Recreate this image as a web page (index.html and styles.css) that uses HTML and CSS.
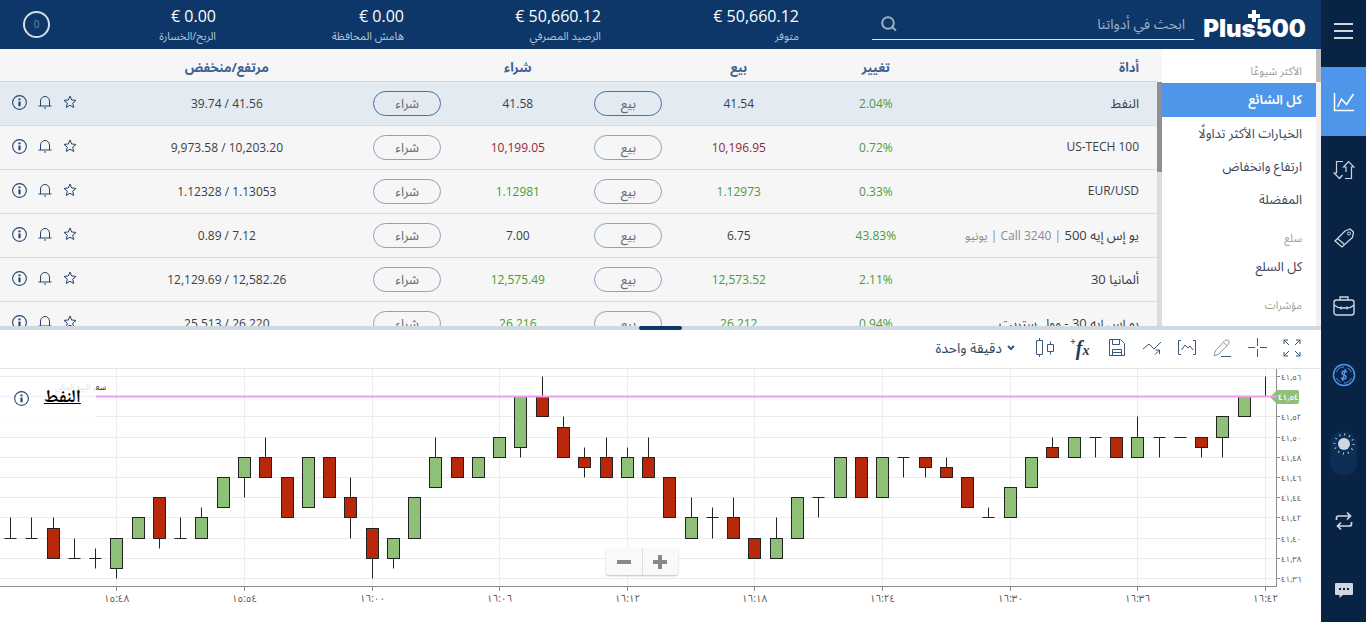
FILE: index.html
```html
<!DOCTYPE html>
<html lang="ar" dir="rtl">
<head>
<meta charset="utf-8">
<title>Plus500</title>
<link rel="stylesheet" href="styles.css">
</head>
<body>
<svg class="defs" aria-hidden="true">
  <symbol id="star" viewBox="0 0 14 14"><path d="M7 1l1.700 4 4.300.400-3.300 2.800 1 4.300L7 10.200l-3.700 2.300 1-4.300L1 5.400 5.300 5z"/></symbol>
  <symbol id="bell" viewBox="0 0 14 14"><path d="M.500 11h13M2.500 11V6a4.500 4.500 0 0 1 9 0v5M6 13h2"/></symbol>
  <symbol id="info" viewBox="0 0 14 14"><circle cx="7" cy="7" r="6.400"/><path class="thick" d="M7 6v4.500M7 3.300v1.500"/></symbol>
</svg>

<nav class="rail">
  <button class="rail-btn menu" aria-label="القائمة"><svg width="20" height="16" viewBox="0 0 20 16"><path d="M0 1h19M0 8h19M0 15h19" stroke-width="2"/></svg></button>
  <button class="rail-btn active" aria-label="التداول"><svg width="22" height="22" viewBox="0 0 22 22"><path d="M1.500 2v17.500H21M4.500 16l4-8 5 5.500L20.500 3" stroke-width="1.500"/></svg></button>
  <button class="rail-btn" aria-label="المراكز"><svg width="22" height="20" viewBox="0 0 22 20"><path d="M10 1.500H3.500V13H1l5.500 5.500L9.500 15M12 18.500h6.500V7H21l-5.500-5.500L10.500 7H13v5" stroke-width="1.200"/></svg></button>
  <button class="rail-btn" aria-label="الأوامر"><svg width="20" height="20" viewBox="0 0 20 20"><path d="M11 3l5-2 3.500 3-1 5.500L8 19 1 13zM3.500 10.500l7 6" stroke-width="1.300"/><circle cx="15" cy="5.500" r="1.500"/></svg></button>
  <button class="rail-btn" aria-label="المراكز المغلقة"><svg width="22" height="20" viewBox="0 0 22 20"><rect x="1" y="4" width="20" height="15" rx="2.500" stroke-width="1.400"/><path d="M7 4V1h8v3M1 9q4 3 7 3h6q4 0 7-3M8 10.500v3M14 10.500v3" stroke-width="1.300"/></svg></button>
  <button class="rail-btn funds" aria-label="الأموال"><svg width="24" height="24" viewBox="0 0 24 24"><circle cx="12" cy="12" r="10.500" stroke-width="1.500"/><path d="M4.500 9A8 8 0 0 1 12 4M19.500 15A8 8 0 0 1 12 20M4.500 15a8 8 0 0 0 4 4M15.500 5a8 8 0 0 1 4 4"/><path d="M15 9.500q-.500-1.500-2.500-1.500-2.500 0-2.500 2 0 1.500 2 2t2 2q0 2-2.500 2-2 0-2.500-1.500M13.500 6l-3 12" stroke-width="1.500"/></svg></button>
  <button class="rail-btn theme" aria-label="السمة"><span class="pill"><svg width="24" height="24" viewBox="0 0 24 24"><circle cx="12" cy="12" r="6" class="solid"/><circle cx="12" cy="12" r="9.500" stroke-dasharray="1 3.970" stroke-width="2"/></svg></span></button>
  <button class="rail-btn swap" aria-label="تبديل"><svg width="18" height="20" viewBox="0 0 18 20"><path d="M1.500 9V7q0-2 2-2H15M12 1.500L15.500 5 12 8.500M16.500 11v2q0 2-2 2H3M6 11.500L2.500 15 6 18.500" stroke-width="1.700"/></svg></button>
  <button class="rail-btn chat" aria-label="الدردشة"><svg width="20" height="17" viewBox="0 0 20 17"><path class="solid" d="M2 1h16q1 0 1 1v10q0 1-1 1H9l-3.500 3V13H2q-1 0-1-1V2q0-1 1-1z"/><path class="dots" d="M5 7h2M9 7h2M13 7h2"/></svg></button>
</nav>

<main class="main">
  <header class="top">
    <div class="logo">Plus500<svg width="12" height="12" viewBox="0 0 12 12"><path d="M4 0h4v4h4v4H8v4H4V8H0V4h4z"/></svg></div>
    <label class="search"><input type="text" placeholder="ابحث في أدواتنا" aria-label="بحث"><svg width="16" height="16" viewBox="0 0 16 16"><circle cx="7" cy="7" r="5.800"/><path d="M11.500 11.500L15 14.500"/></svg></label>
    <dl class="stats">
      <div><dd>€ 50,660.12</dd><dt>متوفر</dt></div>
      <div><dd>€ 50,660.12</dd><dt>الرصيد المصرفي</dt></div>
      <div><dd>€ 0.00</dd><dt>هامش المحافظة</dt></div>
      <div><dd>€ 0.00</dd><dt>الربح/الخسارة</dt></div>
    </dl>
    <span class="counter">0</span>
  </header>

  <section class="market">
    <aside class="cats">
      <div class="cat-list">
        <h2>الأكثر شيوعًا</h2>
        <a href="#" class="on">كل الشائع</a>
        <a href="#">الخيارات الأكثر تداولًا</a>
        <a href="#">ارتفاع وانخفاض</a>
        <a href="#">المفضلة</a>
        <h2>سلع</h2>
        <a href="#">كل السلع</a>
        <h2>مؤشرات</h2>
      </div>
    </aside>
    <div class="scroll"></div>
    <div class="quotes">
      <table>
        <colgroup><col class="c-name"><col class="c-chg"><col class="c-sell"><col class="c-btn"><col class="c-buy"><col class="c-btn"><col class="c-hl"><col class="c-act"></colgroup>
        <thead><tr><th class="name">أداة</th><th>تغيير</th><th>بيع</th><th></th><th>شراء</th><th></th><th>مرتفع/منخفض</th><th></th></tr></thead>
        <tbody>
          <tr class="sel"><td class="name ar">النفط</td><td class="num up">2.04%</td><td class="num">41.54</td><td><button class="deal">بيع</button></td><td class="num">41.58</td><td><button class="deal">شراء</button></td><td class="num">39.74 / 41.56</td><td class="act"><svg><use href="#star"/></svg><svg><use href="#bell"/></svg><svg><use href="#info"/></svg></td></tr>
          <tr><td class="name">US-TECH 100</td><td class="num up">0.72%</td><td class="num down">10,196.95</td><td><button class="deal">بيع</button></td><td class="num down">10,199.05</td><td><button class="deal">شراء</button></td><td class="num">9,973.58 / 10,203.20</td><td class="act"><svg><use href="#star"/></svg><svg><use href="#bell"/></svg><svg><use href="#info"/></svg></td></tr>
          <tr><td class="name">EUR/USD</td><td class="num up">0.33%</td><td class="num up">1.12973</td><td><button class="deal">بيع</button></td><td class="num up">1.12981</td><td><button class="deal">شراء</button></td><td class="num">1.12328 / 1.13053</td><td class="act"><svg><use href="#star"/></svg><svg><use href="#bell"/></svg><svg><use href="#info"/></svg></td></tr>
          <tr><td class="name ar">يو إس إيه 500 <span>| Call 3240 | يونيو</span></td><td class="num up">43.83%</td><td class="num">6.75</td><td><button class="deal">بيع</button></td><td class="num">7.00</td><td><button class="deal">شراء</button></td><td class="num">0.89 / 7.12</td><td class="act"><svg><use href="#star"/></svg><svg><use href="#bell"/></svg><svg><use href="#info"/></svg></td></tr>
          <tr><td class="name ar">ألمانيا 30</td><td class="num up">2.11%</td><td class="num up">12,573.52</td><td><button class="deal">بيع</button></td><td class="num up">12,575.49</td><td><button class="deal">شراء</button></td><td class="num">12,129.69 / 12,582.26</td><td class="act"><svg><use href="#star"/></svg><svg><use href="#bell"/></svg><svg><use href="#info"/></svg></td></tr>
          <tr><td class="name ar">يو إس إيه 30 - وول ستريت</td><td class="num up">0.94%</td><td class="num up">26,212</td><td><button class="deal">بيع</button></td><td class="num up">26,216</td><td><button class="deal">شراء</button></td><td class="num">25,513 / 26,220</td><td class="act"><svg><use href="#star"/></svg><svg><use href="#bell"/></svg><svg><use href="#info"/></svg></td></tr>
        </tbody>
      </table>
    </div>
  </section>

  <div class="splitter"><span></span></div>

  <div class="tools">
    <button aria-label="ملء الشاشة"><svg viewBox="0 0 20 20"><path d="M2 6V2h4M2 2l5 5M14 2h4v4M18 2l-5 5M2 14v4h4M2 18l5-5M18 14v4h-4M18 18l-5-5"/></svg></button>
    <button aria-label="مؤشر متقاطع"><svg viewBox="0 0 20 20"><path d="M1 9.500h7M13 9.500h7M10.500 0v8M10.500 11v8"/></svg></button>
    <button aria-label="رسم"><svg viewBox="0 0 20 20"><path class="soft" d="M2 18l1.500-5.500L13 2.500q2-1.500 3.500 0t0 3.500L7 16zM11.500 4.500l3.500 3.500"/><path d="M9 18.500h10"/></svg></button>
    <button aria-label="نطاق"><svg viewBox="0 0 20 20"><path d="M4 2.500H1.500v14H4M16 2.500h2.500v14H16M4.500 12L8 7l3 3 2-2 3 4"/></svg></button>
    <button aria-label="اتجاه"><svg viewBox="0 0 20 20"><path d="M1 11l6-5 5 5 7-7M13.500 12h4v4M17.500 12l-4.500 4.500"/></svg></button>
    <button aria-label="حفظ"><svg viewBox="0 0 20 20"><path d="M2.500 1.500h11l4 4v12h-15zM5.500 1.500v5h7v-5M5.500 17.500v-6h9v6M5.500 14.500h9"/></svg></button>
    <button aria-label="مؤشرات فنية" class="fx"><sup>+</sup><i>f</i><i class="x">x</i></button>
    <button aria-label="نوع الرسم"><svg viewBox="0 0 20 20"><path d="M1.500 2.500h6v14h-6zM4.500 0v2.500M4.500 16.500V19M12.500 6.500h6v7h-6zM15.500 3.500v3M15.500 13.500v3"/></svg></button>
    <label class="period"><svg width="8" height="6" viewBox="0 0 8 6"><path d="M1 1l3 3 3-3"/></svg><select aria-label="الفترة"><option>دقيقة واحدة</option></select></label>
  </div>

  <section class="chart">
    <svg id="plot" viewBox="0 0 1321 253" direction="ltr"></svg>
    <div class="caption">
      <svg class="info"><use href="#info"/></svg><strong>النفط</strong>
    </div>
    <div class="zoomer"><button aria-label="تكبير"><svg viewBox="0 0 14 14"><path d="M0 7h14M7 0v14"/></svg></button><button aria-label="تصغير"><svg viewBox="0 0 14 14"><path d="M0 7h14"/></svg></button></div>
  </section>
</main>
<script src="chart.js"></script>
</body>
</html>
```
FILE: styles.css
```css
* { box-sizing: border-box; }
body {
  margin: 0;
  height: 100vh;
  display: flex;
  overflow: hidden;
  background: #fff;
  color: #3a3f47;
  font: 12px/16px "Open Sans", "Noto Sans Arabic", "DejaVu Sans", sans-serif;
}
button { font: inherit; color: inherit; background: none; border: 0; padding: 0; }
svg { display: block; fill: none; stroke: currentColor; flex: none; }
.defs { position: absolute; width: 0; height: 0; }
.thick { stroke-width: 2; }

.rail { width: 45px; flex: none; display: flex; flex-direction: column; background: #082344; color: #cfd8e0; }
.rail-btn { height: 68px; flex: none; display: flex; align-items: center; justify-content: center; }
.rail .menu { height: 67px; padding-bottom: 5px; }
.rail .active { height: 69px; background: #4d96ea; color: #fff; }
.rail .funds { height: 70px; color: #4d96ea; }
.rail .theme { height: 86px; }
.rail .swap { height: 50px; }
.rail .chat { height: 64px; margin-top: auto; }
.pill { width: 27px; height: 45px; border-radius: 14px; background: #0c2d54; display: flex; justify-content: center; padding-top: 1px; }
.solid { fill: currentColor; stroke: none; }
.dots { stroke: #082344; stroke-width: 2; }

.main { flex: 1; min-width: 0; display: flex; flex-direction: column; }
.top { height: 49px; flex: none; display: flex; align-items: center; padding: 0 14px 0 23px; background: #0c3768; color: #fff; }
.logo { position: relative; width: 105px; padding-top: 8px; display: flex; justify-content: center; direction: ltr; font: 900 24px/28px Inter, sans-serif; }
.logo svg { position: absolute; left: 46px; top: 3px; fill: #fff; stroke: none; }
.search { width: 322px; height: 30px; margin: 0 8px 0 73px; display: flex; align-items: center; padding: 0 9px; border-bottom: 1px solid #dfe5ec; color: #9fb1c6; }
.search input { flex: 1; min-width: 0; border: 0; padding: 0; outline: 0; background: none; color: #fff; font: 14px/20px "Open Sans", "Noto Sans Arabic", "DejaVu Sans", sans-serif; }
.search input::placeholder { color: #9fb1c6; opacity: 1; }
.search svg { stroke-width: 2; }
.stats { flex: 1; margin: 0; display: grid; grid-template-columns: 198fr 197fr 188fr 166fr; }
.stats div { display: flex; flex-direction: column; align-items: flex-start; }
.stats dd { margin: 0; padding-top: 2px; direction: ltr; font-size: 16px; line-height: 20px; }
.stats dt { font-size: 11px; line-height: 20px; color: #b4c3d5; }
.counter { width: 27px; height: 27px; border: 2px solid #d5dee8; border-radius: 50%; text-align: center; font-size: 10px; line-height: 23px; color: #6f89a8; }

.market { height: 277px; flex: none; display: flex; overflow: hidden; background: #f6f6f6; }
.cats { width: 159px; display: flex; background: linear-gradient(#bdbdbd 33px, #f1f1f1 33px); }
.cat-list { flex: 1; margin-right: 5px; background: #fff; overflow: hidden; }
.cats h2 { margin: 0; height: 34px; padding: 14px 14px 0; font-size: 11px; line-height: 16px; font-weight: 400; color: #a0a0a0; }
.cats a { display: block; height: 33px; padding: 0 14px; font-size: 13px; line-height: 33px; color: #3b4757; text-decoration: none; white-space: nowrap; }
.cats .on { height: 34px; background: #4d96ea; color: #fff; font-weight: 600; }
.scroll { width: 5px; border-top: 33px solid #f6f6f6; background: linear-gradient(#909090 90px, #dcdcdc 90px); }
.quotes { flex: 1; min-width: 0; }
table { width: 100%; table-layout: fixed; border-collapse: collapse; }
.c-name { width: 18.200%; }
.c-chg { width: 12.200%; }
.c-sell { width: 11.500%; }
.c-btn { width: 7.600%; }
.c-buy { width: 11.500%; }
.c-hl { width: 23.600%; }
.c-act { width: 7.800%; }
th, td { padding: 0; text-align: center; white-space: nowrap; }
th { height: 32px; padding-top: 5px; border-bottom: 1px solid #cdd8e2; color: #3f6193; font-size: 13px; font-weight: 700; }
td { height: 44px; border-bottom: 1px solid #dcdcdc; }
.name { padding-right: 18px; text-align: right; }
.ar { font-size: 13px; }
.name span { font-size: 12px; color: #8a8a8a; }
.num { direction: ltr; padding-top: 1px; }
.up { color: #4f9a35; }
.down { color: #8f2a36; }
.sel td { background: #e3eaf2; }
.deal { width: 68px; height: 25px; border: 1px solid #8ba3bf; border-radius: 13px; color: #626870; font-size: 13px; vertical-align: middle; }
.sel .deal { border-color: #4d6f95; }
.act { padding: 0 13px 3px 0; text-align: right; }
.act svg { display: inline-block; width: 14px; height: 14px; margin-left: 11px; vertical-align: middle; color: #24456d; }
.act svg:last-child { width: 15px; height: 15px; margin-left: 0; }

.splitter { height: 4px; flex: none; display: flex; justify-content: center; background: #cfd9e2; }
.splitter span { width: 43px; border-radius: 2px; background: #0c3768; }

.tools { height: 39px; flex: none; display: flex; align-items: center; gap: 15px; padding: 0 19px 3px; border-bottom: 1px solid #e3e3e3; color: #3b5878; }
.tools button { width: 20px; height: 20px; display: flex; }
.tools button svg { width: 20px; height: 20px; }
.soft { stroke: #8796a8; }
.tools .fx { width: 22px; direction: ltr; color: #1d3a60; font: italic 700 20px/20px "Liberation Serif", serif; }
.fx sup { font-size: 10px; line-height: 8px; }
.fx .x { font-size: 14px; line-height: 26px; }
.period { display: flex; align-items: center; gap: 5px; margin-right: 5px; }
.period svg { stroke-width: 2; }
.period select { appearance: none; border: 0; padding: 0; background: none; color: #33475f; font: 14px/20px "Open Sans", "Noto Sans Arabic", "DejaVu Sans", sans-serif; }

.chart { position: relative; flex: 1; min-height: 0; direction: ltr; }
#plot { width: 100%; height: auto; font: 10px "Noto Sans Arabic", "DejaVu Sans", sans-serif; }
#plot text { fill: #555; stroke: none; }
#plot .price-text { font-size: 8px; }
#plot .badge-text { font-size: 8px; font-weight: 600; fill: #fff; }
#plot .sell-label { font-size: 8px; fill: #222; }
.grid { stroke: #ececec; }
.axis { stroke: #8c8c8c; }
.candle { stroke: #222; }
.rise { fill: #8ec177; }
.fall { fill: #b8290b; }
.badge { fill: #8ec177; stroke: none; }
.price { stroke: #f19bf0; stroke-width: 2; }
.caption { position: absolute; left: 0; top: 10px; width: 96px; height: 50px; padding: 5px 14px; display: flex; gap: 15px; background: rgba(255, 255, 255, .85); }
.caption .info { width: 15px; height: 15px; margin-top: 7px; color: #24456d; }
.caption strong { color: #000; font: 700 18px/28px "Noto Naskh Arabic", "Noto Sans Arabic", "Open Sans", sans-serif; text-decoration: underline; }
.zoomer { position: absolute; left: 46%; top: 179px; margin-left: -2px; display: flex; flex-direction: row-reverse; border-radius: 2px; background: #f9f9f9; box-shadow: 0 1px 2px rgba(0, 0, 0, .25); color: #888; }
.zoomer button { width: 36px; height: 27px; display: flex; align-items: center; justify-content: center; }
.zoomer button:first-child { border-left: 1px solid #ddd; }
.zoomer svg { width: 14px; height: 14px; stroke-width: 4; }
```
FILE: chart.js
```js
// Each candle: open, close, high, low, in hundredths above 41.00
const candles = [
  [40,40,42,40],[40,40,42,40],[41,38,42,38],[38,38,40,38],[38,38,39,37],[37,40,40,36],
  [40,42,42,40],[44,40,44,39],[40,40,42,40],[40,42,43,40],[43,46,46,43],[46,48,48,44],
  [48,46,50,46],[46,42,46,42],[43,48,48,43],[48,44,48,44],[44,42,46,40],[41,38,41,36],
  [38,40,40,37],[40,44,44,40],[45,48,50,45],[48,46,48,46],[46,48,48,46],[48,50,50,48],
  [49,54,54,48],[54,52,56,52],[51,48,52,48],[48,47,49,46],[48,46,50,46],[46,48,49,46],
  [48,46,50,46],[46,42,46,42],[40,42,44,40],[42,42,43,40],[42,40,44,40],[40,38,40,38],
  [38,40,42,38],[40,44,44,40],[44,44,44,42],[44,48,48,44],[48,44,48,44],[44,48,48,44],
  [48,48,48,46],[48,47,48,46],[47,46,48,46],[46,43,46,43],[42,42,43,42],[42,45,45,42],
  [45,48,48,45],[49,48,50,48],[48,50,50,48],[50,50,50,48],[50,48,50,48],[48,50,52,48],
  [50,50,50,48],[50,50,50,50],[50,49,50,48],[50,52,52,48],[52,54,54,52],[54,54,56,54]
];
const prices = { 56: '٤١,٥٦', 54: '', 52: '٤١,٥٢', 50: '٤١,٥٠', 48: '٤١,٤٨', 46: '٤١,٤٦', 44: '٤١,٤٤', 42: '٤١,٤٢', 40: '٤١,٤٠', 38: '٤١,٣٨', 36: '٤١,٣٦' };
const times = ['١٥:٤٨', '١٥:٥٤', '١٦:٠٠', '١٦:٠٦', '١٦:١٢', '١٦:١٨', '١٦:٢٤', '١٦:٣٠', '١٦:٣٦', '١٦:٤٢'];
const x = i => Math.round(10 + i * 21.27) + 0.5;
const y = v => Math.round(7 + (56 - v) * 10.1) + 0.5;
const out = [];
const line = (cls, x1, y1, x2, y2) => out.push(`<line class="${cls}" x1="${x1}" y1="${y1}" x2="${x2}" y2="${y2}"/>`);

for (const v in prices) {
  line('grid', 0, y(v), 1276, y(v));
  line('axis', 1276, y(v), 1280, y(v));
  out.push(`<text class="price-text" x="1281" y="${y(v) + 3}">${prices[v]}</text>`);
}
times.forEach((t, k) => {
  const cx = x(5 + 6 * k);
  line('grid', cx, 0, cx, 217);
  line('axis', cx, 217, cx, 222);
  out.push(`<text x="${cx}" y="233" text-anchor="middle">${t}</text>`);
});
line('axis', 0, 217.5, 1276.5, 217.5);
line('axis', 1276.5, 0, 1276.5, 218);
candles.forEach(([open, close, high, low], i) => {
  const cx = x(i), top = y(Math.max(open, close)), bottom = y(Math.min(open, close));
  line('candle', cx, y(high), cx, top);
  line('candle', cx, bottom, cx, y(low));
  if (open !== close) {
    out.push(`<rect class="candle ${close > open ? 'rise' : 'fall'}" x="${cx - 6}" y="${top}" width="12" height="${bottom - top}"/>`);
  } else if (i < candles.length - 1) {
    line('candle', cx - 6, top, cx + 6, top);
  }
});
out.push('<path class="badge" d="M1270 28l7-7h20q2 0 2 2v10q0 2-2 2h-20z"/>');
line('price', 0, 27.5, 1277, 27.5);
out.push('<text class="badge-text" x="1278" y="31">٤١,٥٤</text>');
out.push('<text class="sell-label" x="106" y="21" text-anchor="end">سعر البيع الحالي</text>');
document.getElementById('plot').innerHTML = out.join('');
```
